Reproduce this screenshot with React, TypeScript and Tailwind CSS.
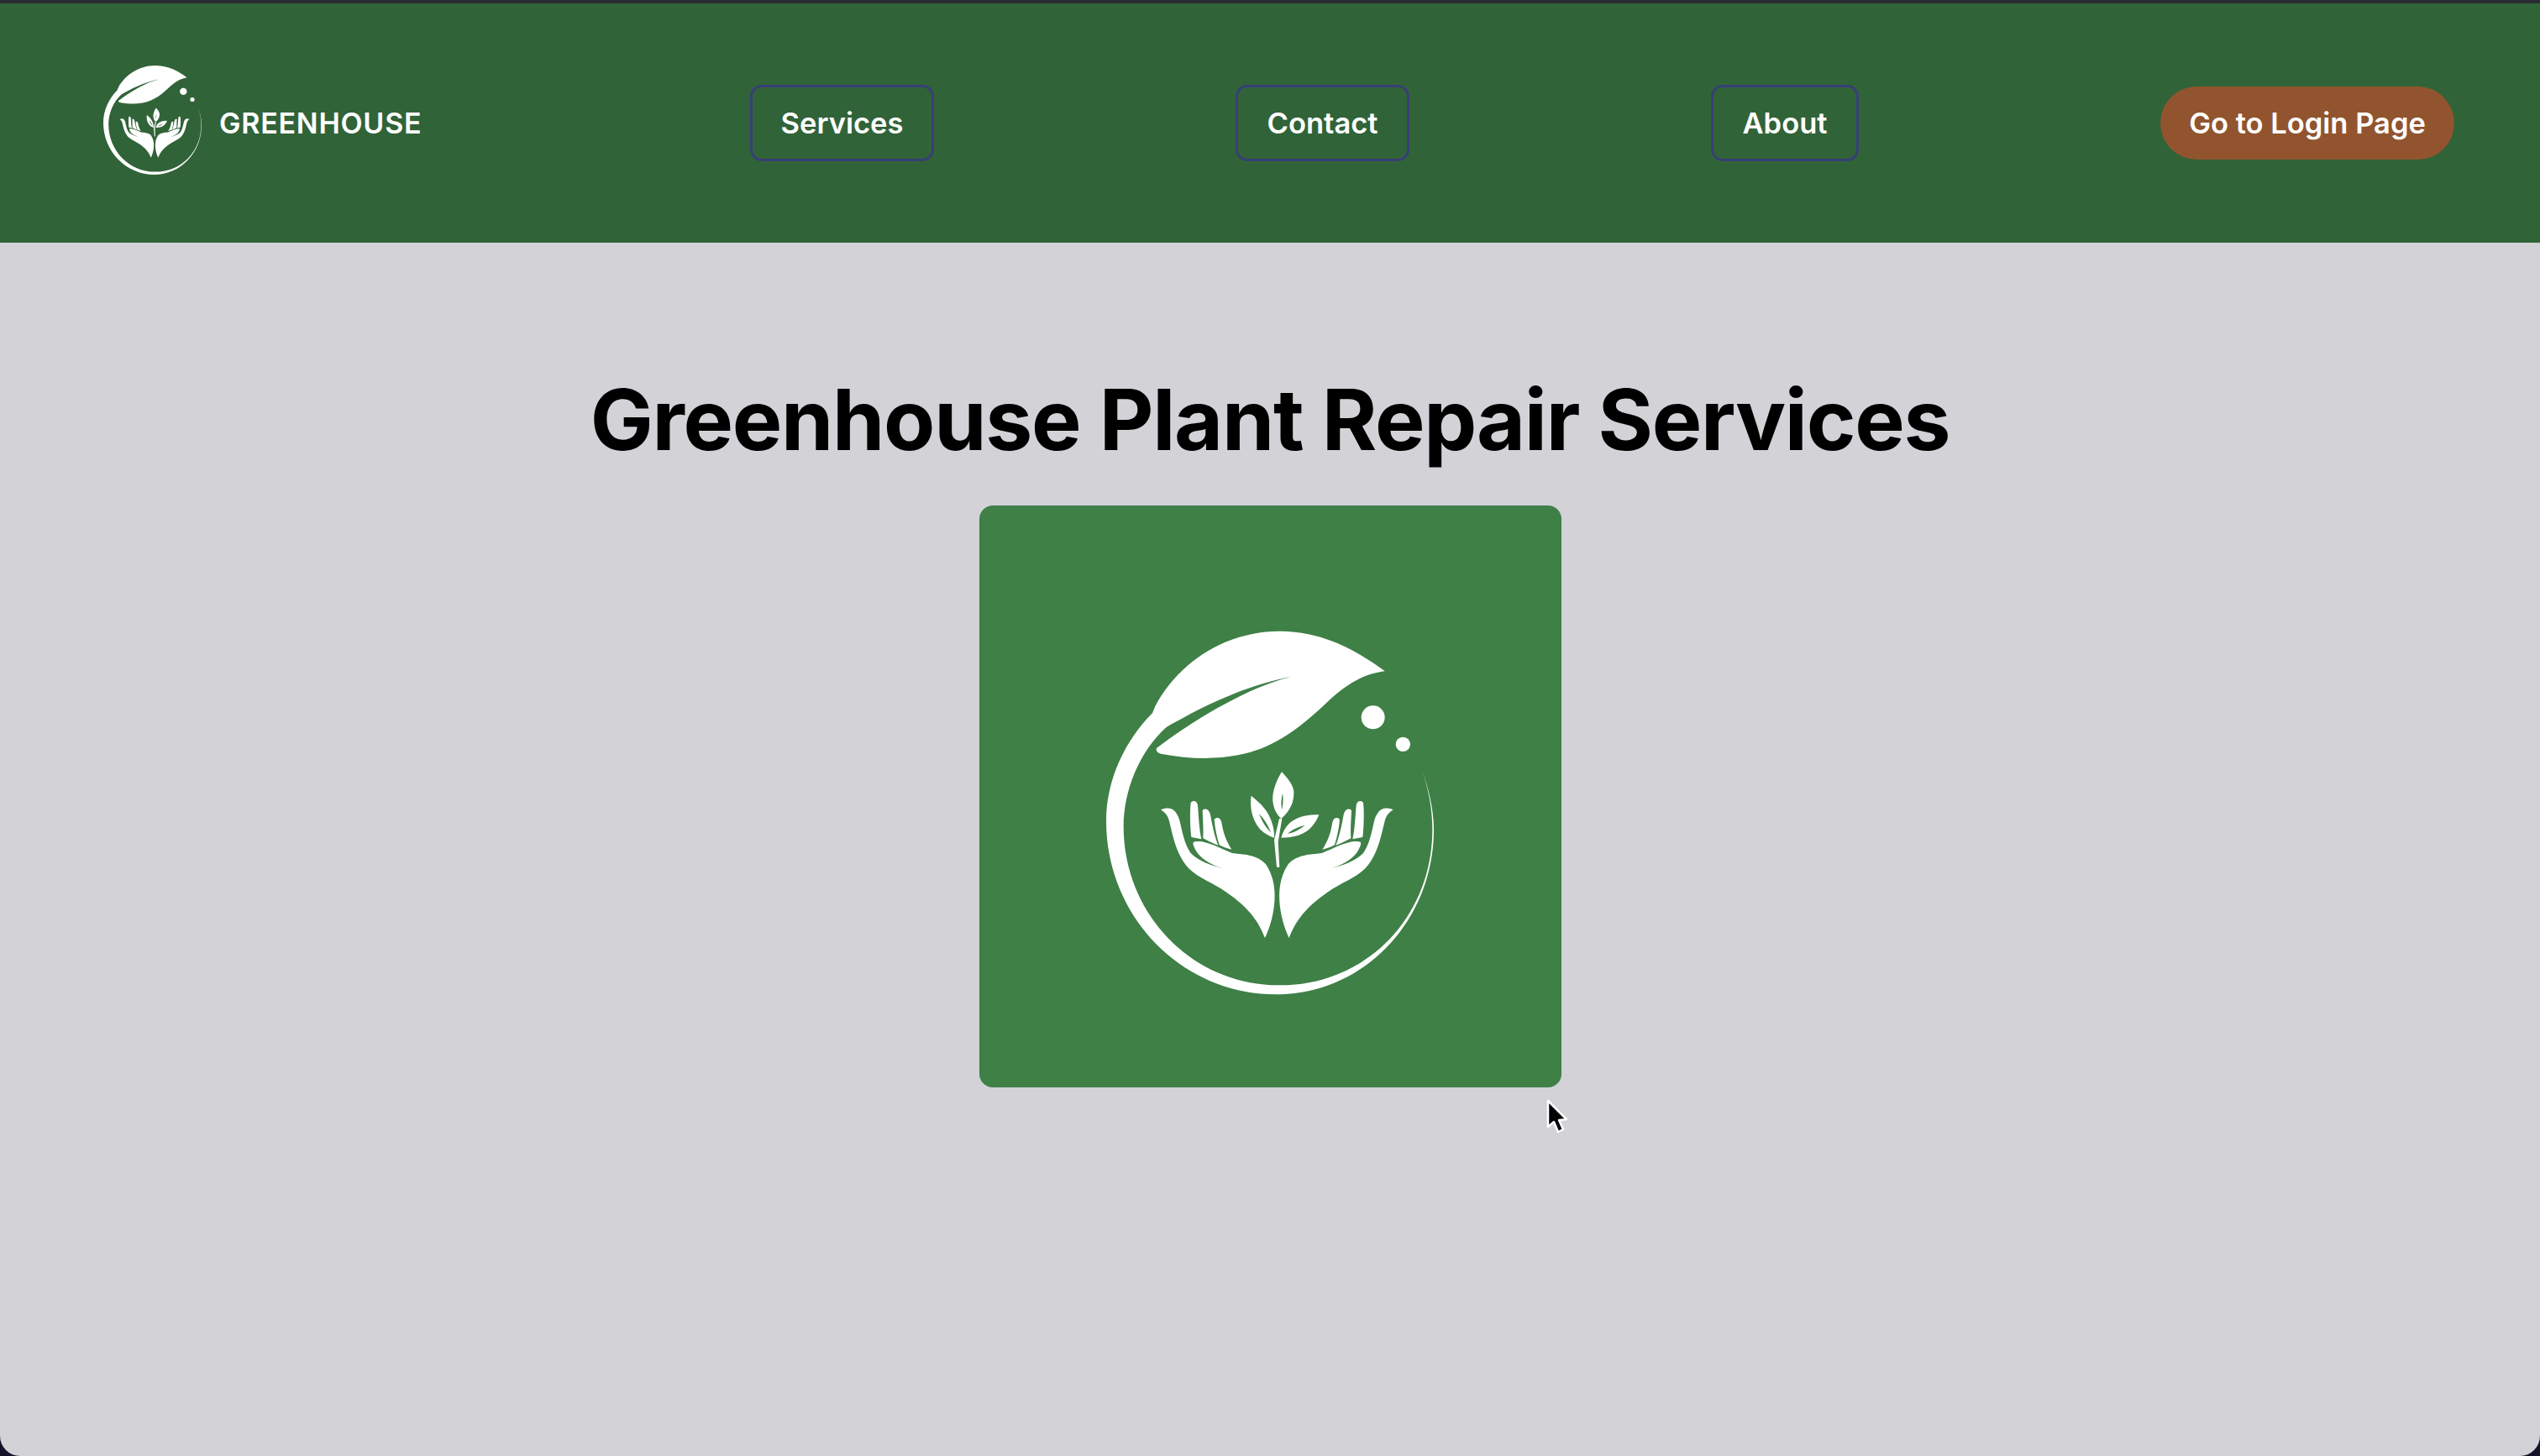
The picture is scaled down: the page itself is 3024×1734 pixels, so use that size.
const HandShape = () => (
  <>
    <path
      fill="currentColor"
      d="M365 790 C400 775 425 790 435 840 C445 885 452 915 472 945 C500 975 550 990 590 1000 C550 990 505 965 490 935 C482 920 478 912 482 905 C520 895 570 925 620 945 C660 950 710 950 740 985 C770 1030 775 1080 770 1130 C765 1180 750 1220 737 1248 C715 1190 680 1140 600 1085 C550 1050 500 1035 465 1000 C420 950 410 890 395 830 C390 810 380 800 365 790 Z"
    />
    <path fill="currentColor" d="M472 765 C480 755 495 758 497 775 C500 810 502 860 510 895 L474 888 C470 850 468 800 472 765 Z" />
    <path fill="currentColor" d="M514 792 C525 782 538 790 542 808 C548 840 555 880 570 917 C550 910 530 900 516 892 C518 860 515 820 514 792 Z" />
    <path fill="currentColor" d="M556 825 C565 815 578 818 582 835 C588 875 600 905 618 932 C600 928 585 922 574 916 C565 885 558 855 556 825 Z" />
  </>
);

const Mark = () => (
  <>
    <path
      fill="currentColor"
      d="M1165 295 C1090 240 960 152 790 152 C600 152 430 260 345 420 L335 445 C240 540 170 680 170 830 C170 1172 440 1450 778 1450 C1090 1450 1340 1186 1340 860 C1340 790 1320 710 1300 655 C1325 730 1335 800 1335 860 C1335 1180 1090 1422 785 1417 C480 1417 232 1165 232 850 C232 720 290 580 385 495 C500 430 650 350 830 315 C680 350 480 470 350 570 Q345 585 365 590 C470 610 560 610 640 595 C780 570 880 480 960 405 C1030 340 1090 305 1165 295 Z"
    />
    <circle cx="1123" cy="460" r="42" fill="currentColor" />
    <circle cx="1230" cy="556" r="26" fill="currentColor" />
    {/* sprout */}
    <path fill="currentColor" d="M779 995 L789 995 L784 905 L798 822 L788 822 L770 898 Z" />
    <path
      fill="currentColor"
      fillRule="evenodd"
      d="M797 655 C775 690 762 730 765 760 C768 790 782 810 795 822 C820 800 842 770 840 725 C838 700 815 675 797 655 Z M800 732 C795 750 794 772 797 790 C802 772 803 750 800 732 Z"
    />
    <path
      fill="currentColor"
      fillRule="evenodd"
      d="M688 740 C682 780 690 825 720 860 C735 875 755 885 770 890 C772 850 755 810 735 785 C720 765 705 755 688 740 Z M716 805 C726 832 742 855 758 872 C748 845 735 825 716 805 Z"
    />
    <path
      fill="currentColor"
      fillRule="evenodd"
      d="M930 808 C890 805 850 815 825 838 C810 852 800 870 795 890 C840 890 880 880 905 850 C918 835 925 820 930 808 Z M818 875 C842 872 862 860 880 845 C860 850 835 860 818 875 Z"
    />
    <HandShape />
    <g transform="translate(1560 0) scale(-1 1)">
      <HandShape />
    </g>
  </>
);

const NavLink = ({ label, width }: { label: string; width: string }) => (
  <a className={`flex h-[91px] items-center justify-center rounded-[14px] border-[3px] border-[#373f76] text-[34.5px] font-semibold text-white ${width}`}>
    {label}
  </a>
);

export default function App() {
  return (
    <div className="relative flex h-screen flex-col overflow-hidden bg-[#15122b] font-['Inter',sans-serif]">
      <div className="h-1 bg-[#2a2b30]" />
      <div className="flex flex-1 flex-col rounded-b-[24px] bg-[#d2d2d7]">
        <header className="flex h-[285px] items-center justify-between bg-[#316338] pl-[123px] pr-[102px]">
          <div className="flex w-[411px] items-center gap-[21px]">
            <svg viewBox="170 152 1170 1298" className="mb-2 h-[130px] w-[117px] text-white">
              <Mark />
            </svg>
            <span className="text-[34px] font-semibold leading-none tracking-[0.75px] text-white">GREENHOUSE</span>
          </div>
          <NavLink label="Services" width="w-[219px]" />
          <NavLink label="Contact" width="w-[207px]" />
          <NavLink label="About" width="w-[176px]" />
          <button className="flex h-[87px] w-[350px] items-center justify-center rounded-full bg-[#91542e] text-[34.5px] font-semibold text-white">
            Go to Login Page
          </button>
        </header>
        <main className="flex flex-col items-center pt-[148px]">
          <h1 className="text-[100px] font-bold leading-[126px] tracking-[-1.25px] text-black">Greenhouse Plant Repair Services</h1>
          <div className="mt-[39px] flex h-[693px] w-[693px] items-center justify-center rounded-[16px] bg-[#3f8047]">
            <svg viewBox="5 -6 1500 1500" className="h-[500px] w-[500px] text-white">
              <Mark />
            </svg>
          </div>
        </main>
      </div>
      {/* mouse pointer caught in the capture */}
      <svg viewBox="0 0 26 42" className="absolute left-[1841px] top-[1309px] h-[42px] w-[26px]">
        <path d="M2 2 L2 33 L9 27 L14 39 L20 36 L15 25 L24 24 Z" fill="#000" stroke="#fff" strokeWidth="2.5" strokeLinejoin="round" />
      </svg>
    </div>
  );
}
